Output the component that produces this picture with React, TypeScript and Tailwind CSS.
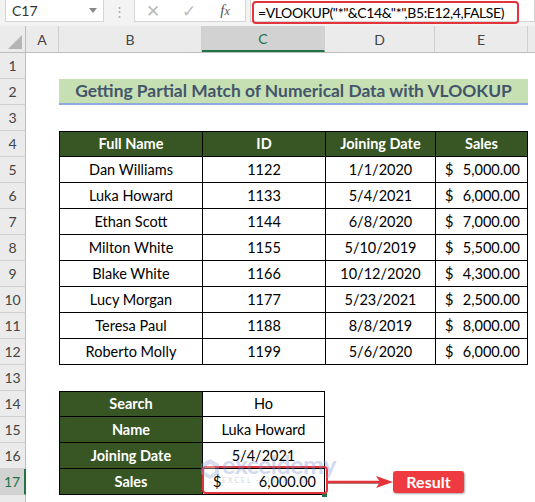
import React from 'react';

// Column widths: row header, A, B, C, D, E
const W = {
  hdr: 'w-[26px]',
  A: 'w-[33px]',
  B: 'w-[143px]',
  C: 'w-[123px]',
  D: 'w-[110px]',
  E: 'w-[93px]',
};

const people = [
  { name: 'Dan Williams', id: '1122', date: '1/1/2020', sales: '5,000.00' },
  { name: 'Luka Howard', id: '1133', date: '5/4/2021', sales: '6,000.00' },
  { name: 'Ethan Scott', id: '1144', date: '6/8/2020', sales: '7,000.00' },
  { name: 'Milton White', id: '1155', date: '5/10/2019', sales: '5,500.00' },
  { name: 'Blake White', id: '1166', date: '10/12/2020', sales: '4,300.00' },
  { name: 'Lucy Morgan', id: '1177', date: '5/23/2021', sales: '2,500.00' },
  { name: 'Teresa Paul', id: '1188', date: '8/8/2019', sales: '8,000.00' },
  { name: 'Roberto Molly', id: '1199', date: '5/6/2020', sales: '6,000.00' },
];

const RowHeader: React.FC<{ n?: number; active?: boolean }> = ({ n, active }) => (
  <div
    className={`${W.hdr} shrink-0 h-full flex items-center justify-center border-b border-[#d0d0d0] text-[14px] ${
      active ? 'bg-[#d2d2d2] border-r-2 border-r-[#217346] text-[#217346]' : 'bg-[#ebebeb] border-r border-r-[#bdbdbd] text-[#444]'
    }`}
  >
    {n}
  </div>
);

const Row: React.FC<{ n?: number; active?: boolean; children?: React.ReactNode }> = ({ n, active, children }) => (
  <div className="flex h-[26px] relative">
    <RowHeader n={n} active={active} />
    <div className={`${W.A} shrink-0`} />
    {children}
  </div>
);

const App: React.FC = () => {
  return (
    <div className="w-[535px] h-[502px] overflow-hidden bg-white text-black" style={{ fontFamily: 'Lato, "Noto Sans", sans-serif' }}>
      {/* Formula bar */}
      <div className="h-[26px] bg-[#f3f3f3] flex items-start">
        <div className="ml-[5px] w-[99px] h-[22px] bg-white border border-[#d4d4d4] border-t-0 flex items-center justify-between pl-[6px] pr-[6px]">
          <span className="text-[14px] text-[#333]">C17</span>
          <span className="w-0 h-0 border-l-[4px] border-r-[4px] border-t-[5px] border-l-transparent border-r-transparent border-t-[#888]" />
        </div>
        <div className="w-[30px] h-[22px] flex items-center justify-center text-[#aaa] text-[13px] leading-none">⋮</div>
        <div className="w-[112px] h-[22px] bg-white border border-[#d4d4d4] border-t-0 flex items-center">
          <span className="w-[36px] text-center text-[#bbb] text-[17px] leading-none">✕</span>
          <span className="w-[36px] text-center text-[#bbb] text-[17px] leading-none">✓</span>
          <span className="w-[36px] text-center text-[#555] text-[15px] italic" style={{ fontFamily: '"Liberation Serif", serif' }}>
            f<span className="text-[12px]">x</span>
          </span>
        </div>
        <div className="ml-[4px] flex-1 h-[22px] bg-white border border-[#d4d4d4] border-t-0 relative">
          <div className="absolute left-[1px] top-[1px] w-[267px] h-[23px] border-[2.5px] border-[#e5333b] rounded-[4px]" />
          <div className="pl-[7px] pt-[2px] text-[14px] text-black tracking-[-0.4px] whitespace-nowrap">=VLOOKUP("*"&amp;C14&amp;"*",B5:E12,4,FALSE)</div>
        </div>
      </div>

      {/* Column headers */}
      <div className="flex h-[27px] bg-[#ebebeb] border-b border-[#bdbdbd] text-[14px] text-[#444]">
        <div className={`${W.hdr} shrink-0 border-r border-[#bdbdbd] relative`}>
          <svg className="absolute right-[3px] bottom-[3px]" width="14" height="14" viewBox="0 0 14 14">
            <polygon points="14,0 14,14 0,14" fill="#b5b5b5" />
          </svg>
        </div>
        <div className={`${W.A} shrink-0 border-r border-[#d0d0d0] flex items-center justify-center`}>A</div>
        <div className={`${W.B} shrink-0 border-r border-[#d0d0d0] flex items-center justify-center`}>B</div>
        <div className={`${W.C} shrink-0 border-r border-[#d0d0d0] bg-[#d2d2d2] border-b-2 border-b-[#217346] text-[#217346] flex items-center justify-center`}>C</div>
        <div className={`${W.D} shrink-0 border-r border-[#d0d0d0] flex items-center justify-center`}>D</div>
        <div className={`${W.E} shrink-0 border-r border-[#d0d0d0] flex items-center justify-center`}>E</div>
        <div className="flex-1" />
      </div>

      {/* Sheet */}
      <div className="text-[14.5px]">
        <Row n={1} />
        <Row n={2}>
          <div className="w-[469px] shrink-0 h-[26px] bg-[#c6e0b4] border-b-2 border-[#8ea9db] flex items-center justify-center font-bold text-[17.4px] text-[#44546a]">
            Getting Partial Match of Numerical Data with VLOOKUP
          </div>
        </Row>
        <Row n={3} />
        <Row n={4}>
          {['Full Name', 'ID', 'Joining Date', 'Sales'].map((h, i) => (
            <div
              key={h}
              className={`${[W.B, W.C, W.D, W.E][i]} shrink-0 h-full bg-[#375623] text-white font-bold border-t border-b border-l border-black ${
                i === 3 ? 'border-r' : ''
              } flex items-center justify-center`}
            >
              {h}
            </div>
          ))}
        </Row>
        {people.map((p, i) => (
          <Row key={p.id} n={5 + i}>
            <div className={`${W.B} shrink-0 h-full border-l border-b border-black flex items-center justify-center`}>{p.name}</div>
            <div className={`${W.C} shrink-0 h-full border-l border-b border-black flex items-center justify-center`}>{p.id}</div>
            <div className={`${W.D} shrink-0 h-full border-l border-b border-black flex items-center justify-center`}>{p.date}</div>
            <div className={`${W.E} shrink-0 h-full border-l border-r border-b border-black flex items-center justify-between pl-[9px] pr-[7px]`}>
              <span>$</span>
              <span>{p.sales}</span>
            </div>
          </Row>
        ))}
        <Row n={13} />
        {[
          ['Search', 'Ho'],
          ['Name', 'Luka Howard'],
          ['Joining Date', '5/4/2021'],
        ].map(([label, value], i) => (
          <Row key={label} n={14 + i}>
            <div className={`${W.B} shrink-0 h-full bg-[#375623] text-white font-bold border-l border-b border-black ${i === 0 ? 'border-t' : ''} flex items-center justify-center`}>
              {label}
            </div>
            <div className={`${W.C} shrink-0 h-full border-l border-r border-b border-black ${i === 0 ? 'border-t' : ''} flex items-center justify-center`}>
              {value}
            </div>
          </Row>
        ))}
        <Row n={17} active>
          <div className={`${W.B} shrink-0 h-full bg-[#375623] text-white font-bold border-l border-b border-black flex items-center justify-center`}>
            Sales
          </div>
          <div className={`${W.C} shrink-0 h-full border-l border-r border-b border-black flex items-center justify-between pl-[10px] pr-[8px] relative`}>
            <span>$</span>
            <span>6,000.00</span>
            {/* selection marker + highlight box */}
            <span className="absolute right-[-3px] bottom-[-3px] w-[5px] h-[5px] bg-[#217346]" />
            <span className="absolute left-[-1px] top-[-3px] w-[126px] h-[28px] border-[2.5px] border-[#e5333b] rounded-[4px]" />
            {/* watermark */}
            <div className="absolute left-[-3px] top-[-16px] flex items-center gap-[2px] opacity-35 pointer-events-none">
              <svg width="20" height="22" viewBox="0 0 20 22">
                <polygon points="10,1 19,6 19,16 10,21 1,16 1,6" fill="#8fa3cf" />
                <polygon points="10,6 15,9 15,14 10,17 5,14 5,9" fill="#ffffff" />
              </svg>
              <div className="flex flex-col leading-none">
                <span className="text-[25px] font-bold text-[#7f95d1] tracking-[-0.5px] leading-[22px]">exceldemy</span>
                <span className="text-[7px] text-[#8a8a8a] tracking-[2px] mt-[2px]">EXCEL · DATA · BI</span>
              </div>
            </div>
          </div>
          <div className="flex items-center h-full">
            <svg width="67" height="14" viewBox="0 0 67 14" className="ml-[1px]">
              <line x1="0" y1="8" x2="54" y2="8" stroke="#9a9a9a" strokeWidth="2" />
              <line x1="0" y1="7" x2="54" y2="7" stroke="#e5333b" strokeWidth="2.5" />
              <polygon points="50,1 67,7 50,13 54,7" fill="#e5333b" />
            </svg>
            <div className="w-[71px] h-[22px] bg-[#ee3a40] rounded-[3px] shadow-[1px_1px_2px_rgba(0,0,0,0.35)] text-white font-bold text-[16px] flex items-center justify-center">
              Result
            </div>
          </div>
        </Row>
        <Row />
      </div>
    </div>
  );
};

export default App;
